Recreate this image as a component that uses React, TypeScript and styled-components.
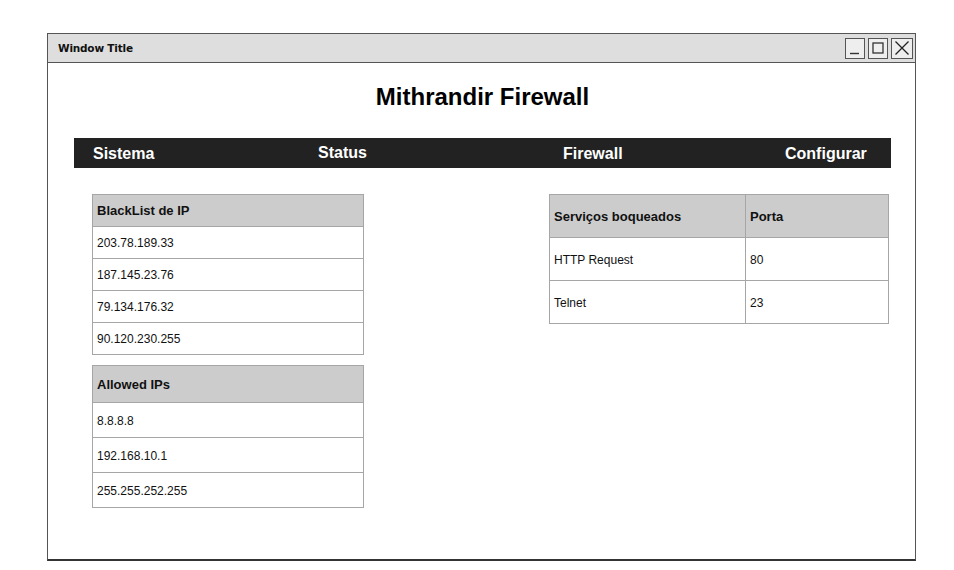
import React from "react";
import styled, { createGlobalStyle } from "styled-components";

const Global = createGlobalStyle`
  html, body { margin: 0; padding: 0; background: #ffffff; }
  body { font-family: "Liberation Sans", Arial, sans-serif; color: #000; }
`;

const Window = styled.div`
  box-sizing: border-box;
  margin: 33px 0 0 47px;
  width: 869px;
  height: 528px;
  border: 1.5px solid #555;
  border-bottom: 2px solid #333;
  display: flex;
  flex-direction: column;
  background: #fff;
`;

const TitleBar = styled.div`
  box-sizing: border-box;
  height: 29px;
  background: #dedede;
  border-bottom: 1.5px solid #555;
  display: flex;
  align-items: center;
  justify-content: space-between;
  padding: 0 2px 0 10px;
`;

const TitleText = styled.span`
  font-family: "DejaVu Sans", sans-serif;
  font-weight: bold;
  font-size: 10.5px;
  letter-spacing: -0.2px;
  color: #111;
`;

const WinButtons = styled.div`
  display: flex;
  gap: 3px;
  align-items: center;
`;

const WinButton = styled.div<{ $w?: number }>`
  box-sizing: border-box;
  width: ${(p) => p.$w ?? 20}px;
  height: 21px;
  border: 1.5px solid #555;
  background: #eee;
  display: flex;
  align-items: center;
  justify-content: center;
`;

const Content = styled.div`
  display: flex;
  flex-direction: column;
  padding: 0 24px 0 26px;
`;

const Heading = styled.h1`
  margin: 20px 0 0;
  height: 28px;
  line-height: 28px;
  text-align: center;
  font-size: 24px;
  font-weight: bold;
`;

const NavBar = styled.nav`
  margin-top: 27px;
  height: 30px;
  background: #222222;
  display: grid;
  grid-template-columns: 225px 245px 222px auto;
  align-items: center;
  padding-left: 19px;
`;

const NavItem = styled.span<{ $lift?: number }>`
  color: #fff;
  font-size: 16px;
  font-weight: bold;
  position: relative;
  top: ${(p) => 1 - (p.$lift ?? 0)}px;
`;

const Panels = styled.div`
  display: flex;
  align-items: flex-start;
  margin-top: 26px;
  padding-left: 18px;
  padding-right: 2px;
`;

const LeftColumn = styled.div`
  display: flex;
  flex-direction: column;
  gap: 10px;
  width: 272px;
`;

const Table = styled.table<{ $width: number }>`
  border-collapse: collapse;
  width: ${(p) => p.$width}px;
  table-layout: fixed;
`;

const RightTable = styled(Table)`
  margin-left: auto;
`;

const HeadCell = styled.th<{ $h: number }>`
  box-sizing: border-box;
  height: ${(p) => p.$h}px;
  background: #cccccc;
  border: 1px solid #a6a6a6;
  text-align: left;
  font-size: 13px;
  font-weight: bold;
  padding: 0 4px;
  color: #111;
`;

const Cell = styled.td<{ $h: number }>`
  box-sizing: border-box;
  height: ${(p) => p.$h}px;
  border: 1px solid #a6a6a6;
  font-size: 12px;
  padding: 1px 4px 0;
  color: #111;
`;

const ListTable = ({
  title,
  items,
  headH,
  rowH,
}: {
  title: string;
  items: string[];
  headH: number;
  rowH: number;
}) => (
  <Table $width={272}>
    <thead>
      <tr>
        <HeadCell $h={headH}>{title}</HeadCell>
      </tr>
    </thead>
    <tbody>
      {items.map((ip) => (
        <tr key={ip}>
          <Cell $h={rowH}>{ip}</Cell>
        </tr>
      ))}
    </tbody>
  </Table>
);

export default function App() {
  return (
    <>
      <Global />
      <Window>
        <TitleBar>
          <TitleText>Window Title</TitleText>
          <WinButtons>
            <WinButton>
              <svg width="14" height="14" viewBox="0 0 14 14">
                <path d="M2 12.5 H11" stroke="#333" strokeWidth="1.4" />
              </svg>
            </WinButton>
            <WinButton>
              <svg width="14" height="14" viewBox="0 0 14 14">
                <rect x="2" y="2" width="10" height="10" fill="none" stroke="#333" strokeWidth="1.3" />
              </svg>
            </WinButton>
            <WinButton $w={22}>
              <svg width="16" height="16" viewBox="0 0 16 16">
                <path d="M1.5 1.5 L14.5 14.5 M14.5 1.5 L1.5 14.5" stroke="#222" strokeWidth="1.3" />
              </svg>
            </WinButton>
          </WinButtons>
        </TitleBar>
        <Content>
          <Heading>Mithrandir Firewall</Heading>
          <NavBar>
            <NavItem>Sistema</NavItem>
            <NavItem $lift={1}>Status</NavItem>
            <NavItem>Firewall</NavItem>
            <NavItem>Configurar</NavItem>
          </NavBar>
          <Panels>
            <LeftColumn>
              <ListTable
                title="BlackList de IP"
                items={["203.78.189.33", "187.145.23.76", "79.134.176.32", "90.120.230.255"]}
                headH={32}
                rowH={32}
              />
              <ListTable
                title="Allowed IPs"
                items={["8.8.8.8", "192.168.10.1", "255.255.252.255"]}
                headH={37}
                rowH={35}
              />
            </LeftColumn>
            <RightTable $width={340}>
              <colgroup>
                <col style={{ width: 196 }} />
                <col />
              </colgroup>
              <thead>
                <tr>
                  <HeadCell $h={43}>Serviços boqueados</HeadCell>
                  <HeadCell $h={43}>Porta</HeadCell>
                </tr>
              </thead>
              <tbody>
                <tr>
                  <Cell $h={43}>HTTP Request</Cell>
                  <Cell $h={43}>80</Cell>
                </tr>
                <tr>
                  <Cell $h={43}>Telnet</Cell>
                  <Cell $h={43}>23</Cell>
                </tr>
              </tbody>
            </RightTable>
          </Panels>
        </Content>
      </Window>
    </>
  );
}
